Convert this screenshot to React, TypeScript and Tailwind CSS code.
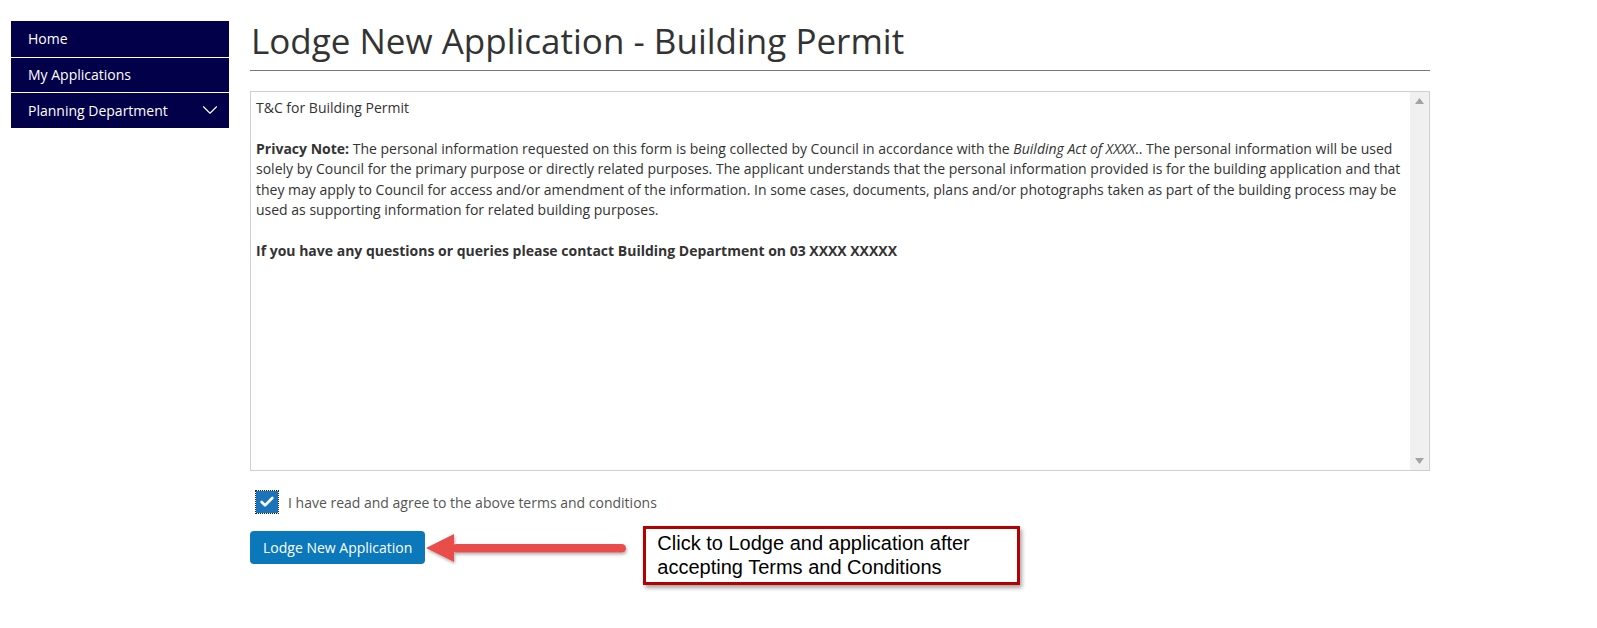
import { Check, ChevronDown } from "lucide-react";

const navItems = ["Home", "My Applications", "Planning Department"];

function Sidebar() {
  return (
    <nav className="mt-[21px] ml-[11px] w-[218px] shrink-0 self-start bg-[#020048]">
      {navItems.map((label, i) => (
        <div
          key={label}
          className={`flex h-[35.5px] items-center justify-between pr-[6px] pl-[17px] text-[14px] text-white ${
            i > 0 ? "border-t border-white" : ""
          }`}
        >
          <span>{label}</span>
          {label === "Planning Department" && <ChevronDown className="h-[26px] w-[26px]" strokeWidth={1} />}
        </div>
      ))}
    </nav>
  );
}

function TermsBox() {
  return (
    <div className="mt-[20px] flex h-[380px] border border-[#cfcfcf] bg-white">
      <div className="flex-1 pt-[6px] pl-[5px] text-[14px] leading-[20.4px] text-[#333]">
        <p>T&amp;C for Building Permit</p>
        <p className="mt-[20.4px]">
          <b className="font-bold">Privacy Note:</b> The personal information requested on this form is being collected by Council in accordance with the{" "}
          <i>Building Act of XXXX</i>.. The personal information will be used
          <br />
          solely by Council for the primary purpose or directly related purposes. The applicant understands that the personal information provided is for the building application and that
          <br />
          they may apply to Council for access and/or amendment of the information. In some cases, documents, plans and/or photographs taken as part of the building process may be
          <br />
          used as supporting information for related building purposes.
        </p>
        <p className="mt-[20.4px] font-bold">If you have any questions or queries please contact Building Department on 03 XXXX XXXXX</p>
      </div>
      <div className="flex w-[19px] flex-col items-center justify-between bg-[#f0f0f0] py-[6px]">
        <svg width="9" height="6" viewBox="0 0 9 6">
          <path d="M4.5 0L9 6H0z" fill="#a3a3a3" />
        </svg>
        <svg width="9" height="6" viewBox="0 0 9 6">
          <path d="M0 0h9L4.5 6z" fill="#a3a3a3" />
        </svg>
      </div>
    </div>
  );
}

function Arrow() {
  return (
    <svg width="206" height="36" viewBox="0 0 206 36" className="shrink-0">
      <defs>
        <filter id="sh" x="-10%" y="-30%" width="120%" height="180%">
          <feDropShadow dx="1" dy="2" stdDeviation="1.5" floodColor="#000" floodOpacity="0.3" />
        </filter>
      </defs>
      <g filter="url(#sh)" fill="#e84d4a">
        <path d="M1 16L29 2V30z" />
        <rect x="27" y="12" width="174" height="8.5" rx="4.25" />
      </g>
    </svg>
  );
}

export default function App() {
  return (
    <div className="flex min-h-[628px] bg-white font-['Open_Sans',sans-serif]">
      <Sidebar />
      <main className="ml-[21px] w-[1180px] shrink-0">
        <h1 className="border-b border-[#777] pt-[17px] pb-[5px] pl-[1px] text-[35px] leading-[48px] text-[#333]">
          Lodge New Application - Building Permit
        </h1>
        <TermsBox />
        <label className="mt-[20px] flex items-center gap-[10px] pl-[6px] text-[14px] text-[#555]">
          <span className="flex h-[22px] w-[22px] items-center justify-center bg-[#1b74bb] outline-1 outline-dotted outline-[#222]">
            <Check className="h-[16px] w-[16px] text-white" strokeWidth={4} />
          </span>
          I have read and agree to the above terms and conditions
        </label>
        <div className="mt-[18px] flex items-start">
          <button className="h-[33px] rounded-[4px] bg-[#0a78ba] px-[13px] text-[14px] text-white">
            Lodge New Application
          </button>
          <div className="mt-[1px]">
            <Arrow />
          </div>
          <div className="mt-[-5px] ml-[12px] w-[377px] border-[3px] border-[#b30000] bg-white py-[3px] pl-[11px] font-['Liberation_Sans',Arial,sans-serif] text-[20px] leading-[23.5px] text-black shadow-[2px_3px_4px_rgba(0,0,0,0.35)]">
            Click to Lodge and application after
            <br />
            accepting Terms and Conditions
          </div>
        </div>
      </main>
    </div>
  );
}
